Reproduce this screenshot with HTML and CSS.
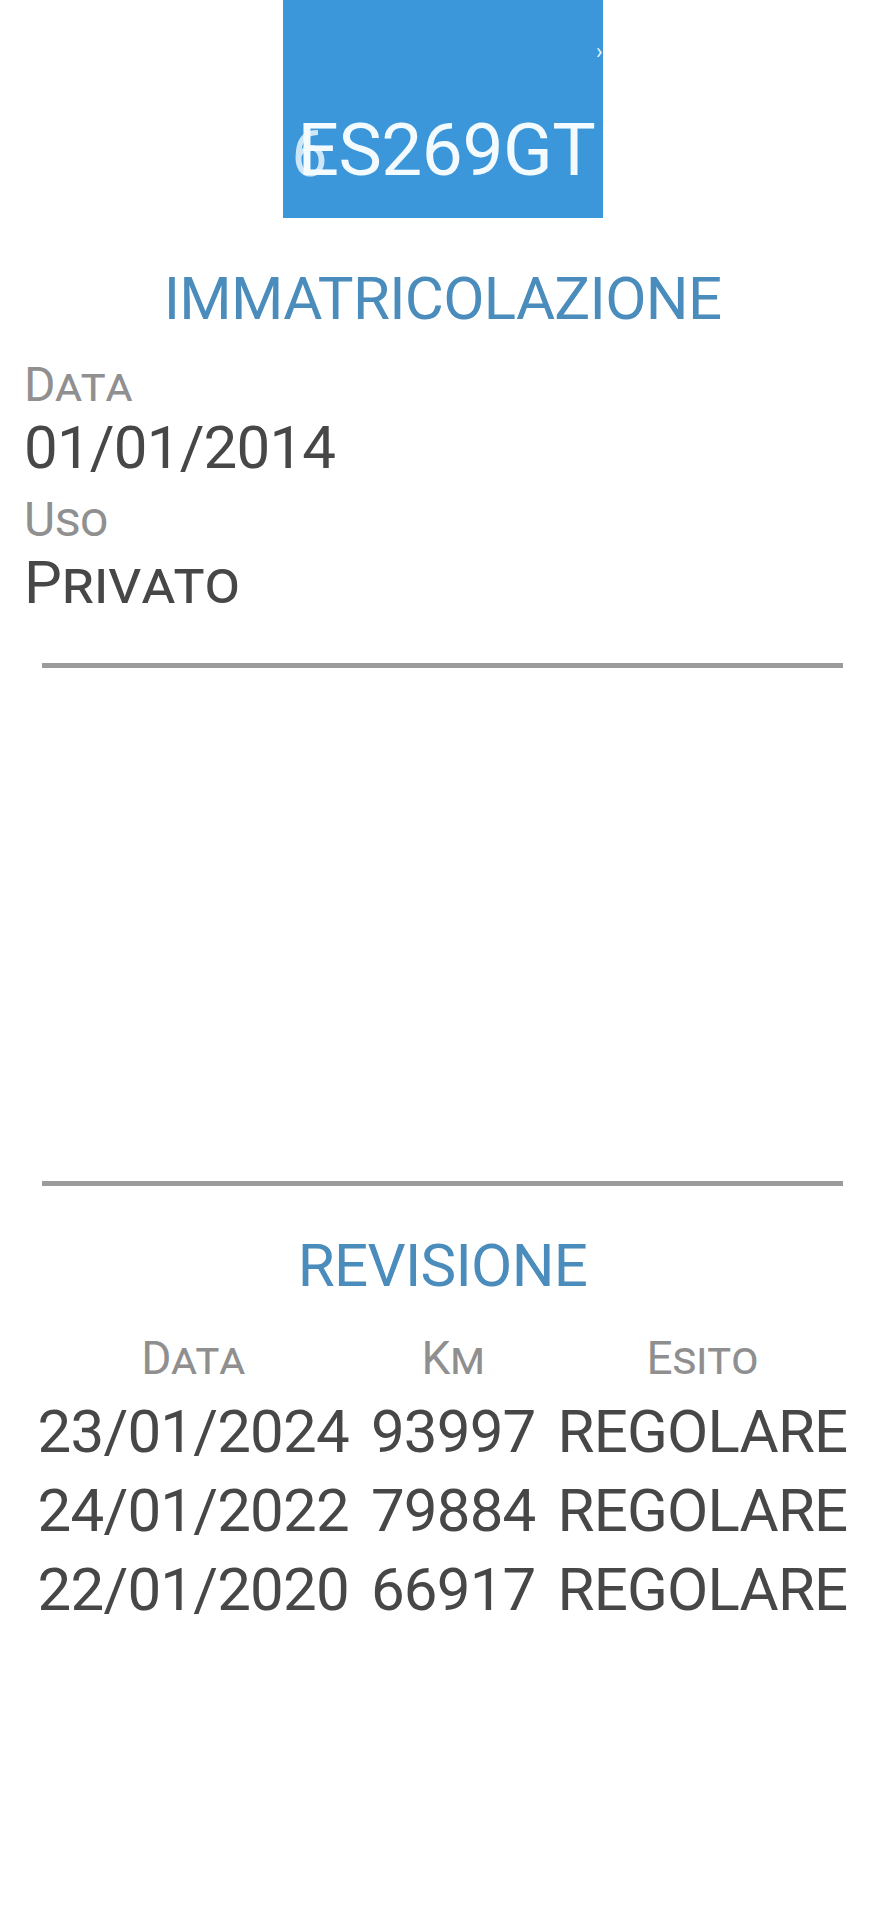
FILE: index.html
```html
<!DOCTYPE html>
<html lang="it">
<head>
    <meta charset="UTF-8">
    <meta name="viewport" content="width=device-width, initial-scale=1.0">
    <title>Dettaglio veicolo</title>
    <link rel="stylesheet" href="styles.css">
</head>
<body>
    <div class="plate">
        <span class="plate-ghost">6</span>
        <span class="plate-text">ES269GT</span>
        <span class="plate-arrow">›</span>
    </div>

    <h2 class="section-title first">IMMATRICOLAZIONE</h2>
    <div class="fields">
        <div class="field">
            <div class="label">Data</div>
            <div class="value">01/01/2014</div>
        </div>
        <div class="field">
            <div class="label">Uso</div>
            <div class="value caps">Privato</div>
        </div>
    </div>

    <hr class="divider top">
    <div class="blank"></div>
    <hr class="divider">

    <h2 class="section-title">REVISIONE</h2>
    <table class="revisions">
        <thead>
            <tr>
                <th>Data</th>
                <th>Km</th>
                <th>Esito</th>
            </tr>
        </thead>
        <tbody>
            <tr><td>23/01/2024</td><td>93997</td><td>REGOLARE</td></tr>
            <tr><td>24/01/2022</td><td>79884</td><td>REGOLARE</td></tr>
            <tr><td>22/01/2020</td><td>66917</td><td>REGOLARE</td></tr>
        </tbody>
    </table>
</body>
</html>
```

FILE: styles.css
```css
body { margin: 0; font-family: Roboto, "Liberation Sans", sans-serif; background: #fff; color: #474747; }

.plate { position: relative; width: 320px; height: 218px; box-sizing: border-box; margin: 0 auto; padding: 113px 0 0 15px; background: #3b97d9; overflow: hidden; white-space: nowrap; }
.plate-text { position: relative; font-size: 73px; line-height: 74px; letter-spacing: -0.5px; color: #f4fbff; }
.plate-ghost { position: absolute; left: 9px; top: 118px; font-size: 64px; line-height: 74px; color: rgba(244, 251, 255, 0.8); }
.plate-arrow { position: absolute; right: 0; top: 40px; font-size: 22px; line-height: 24px; color: #eaf6ff; }

.section-title { margin: 45px 0 0; font-size: 60px; line-height: 70px; font-weight: 400; letter-spacing: -0.7px; text-align: center; color: #4a8cbb; }
.section-title.first { margin-top: 46px; }

.fields { padding: 23px 24px 0; }
.field { margin-bottom: 9px; }
.label { font-size: 48px; line-height: 56px; font-variant: small-caps; color: #909090; }
.value { font-size: 60px; line-height: 70px; letter-spacing: -0.8px; color: #474747; }
.value.caps { font-variant: small-caps; letter-spacing: 0; }

.divider { margin: 0 42px; height: 5px; border: none; background: #9b9b9b; }
.divider.top { margin-top: 45px; }
.blank { height: 513px; }

.revisions { margin: 30px auto 0; border-collapse: collapse; }
.revisions th { padding: 0 11px 7px; font-size: 46px; line-height: 54px; font-weight: 400; font-variant: small-caps; color: #8f8f8f; text-align: center; }
.revisions td { padding: 0 11px; font-size: 60px; line-height: 79px; letter-spacing: -0.8px; text-align: center; color: #474747; }
```
